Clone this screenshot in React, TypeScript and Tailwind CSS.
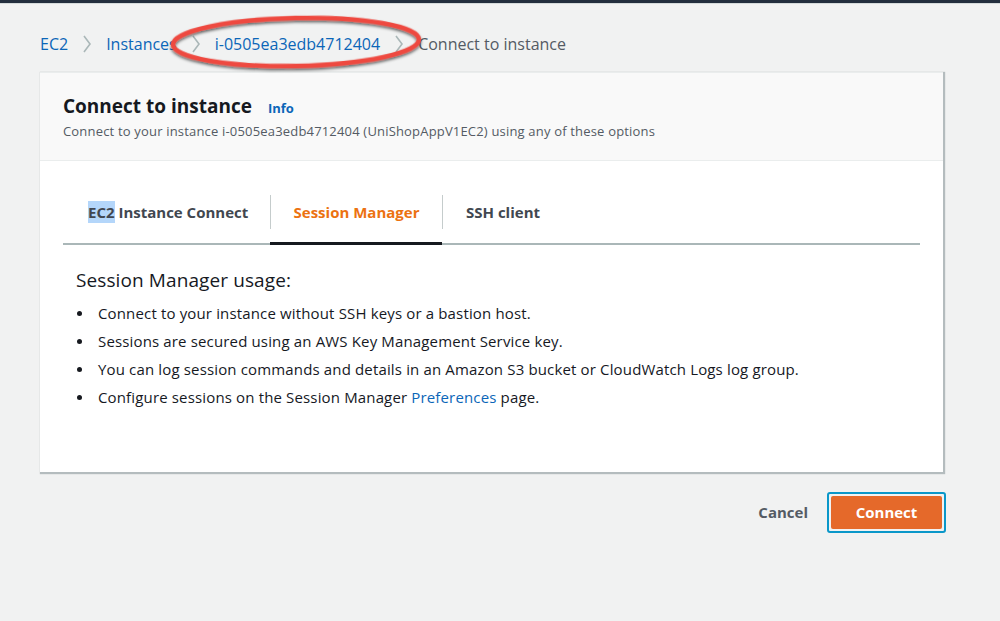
import React from "react";

const Chevron = () => (
  <svg width="10" height="20" viewBox="0 0 10 20" className="mx-[14px]">
    <path d="M2 2 L8 10 L2 18" fill="none" stroke="#aab7b8" strokeWidth="1.6" />
  </svg>
);

export default function App() {
  const font = { fontFamily: "'Open Sans', 'Noto Sans', sans-serif" };
  return (
    <div className="relative w-[1000px] h-[621px] bg-[#f1f2f2] overflow-hidden" style={font}>
      <div className="h-[3px] bg-[#232f3e]" />
      <div className="h-[1px] bg-[#d5dbdb]" />
      <nav className="flex items-center pl-[40px] pt-[27px] h-[52px] text-[16px] leading-[22px]">
        <span className="text-[#0b66b8]">EC2</span>
        <Chevron />
        <span className="text-[#0b66b8]">Instances</span>
        <Chevron />
        <span className="text-[#0b66b8]">i-0505ea3edb4712404</span>
        <Chevron />
        <span className="text-[#545b64]">Connect to instance</span>
      </nav>
      <div className="ml-[40px] mt-[16px] w-[903px] bg-white shadow-[1px_1px_1px_1px_rgba(0,28,36,0.25)] border-t border-[#eaeded]">
        <div className="bg-[#f9f9f9] border-b border-[#eaeded] px-[23px] pt-[19px] h-[88px]">
          <div className="flex items-baseline">
            <h1 className="text-[19px] font-bold text-[#16191f] leading-[28px]">Connect to instance</h1>
            <span className="ml-[16px] text-[13px] font-bold text-[#0b66b8]">Info</span>
          </div>
          <p className="text-[13px] text-[#545b64] leading-[20px] mt-[1px] tracking-[0.18px]">
            Connect to your instance i-0505ea3edb4712404 (UniShopAppV1EC2) using any of these options
          </p>
        </div>
        <div className="px-[23px] pt-[34px]">
          <div className="relative flex border-b-2 border-[#aab7b8] h-[50px] items-start">
            <div className="flex items-center h-[34px] w-[207px] pl-[25px] text-[15px] font-bold text-[#414750]">
              <span className="bg-[#b4d6fa]">EC2</span>&nbsp;Instance Connect
            </div>
            <div className="w-[1px] h-[34px] bg-[#c5cccc]" />
            <div className="relative w-[171px] h-[48px] flex items-start justify-center">
              <div className="h-[34px] flex items-center text-[15px] font-bold text-[#ec7211]">
                Session Manager
              </div>
              <div className="absolute -left-[1px] right-0 -bottom-[2px] h-[3px] bg-[#16191f]" />
            </div>
            <div className="w-[1px] h-[34px] bg-[#c5cccc]" />
            <div className="flex items-center h-[34px] pl-[23px] text-[15px] font-bold text-[#414750]">SSH client</div>
          </div>
        </div>
        <div className="px-[36px] pt-[21px] h-[227px] text-[#16191f]">
          <h2 className="text-[19px] leading-[28px] tracking-[0.1px]">Session Manager usage:</h2>
          <ul className="mt-[5px] text-[15px] leading-[28px] tracking-[0.15px]">
            {[
              <>Connect to your instance without SSH keys or a bastion host.</>,
              <>Sessions are secured using an AWS Key Management Service key.</>,
              <>You can log session commands and details in an Amazon S3 bucket or CloudWatch Logs log group.</>,
              <>Configure sessions on the Session Manager <span className="text-[#0b66b8]">Preferences</span> page.</>,
            ].map((t, i) => (
              <li key={i} className="flex items-center">
                <span className="w-[22px] pl-[1px] flex items-center">
                  <span className="block w-[5px] h-[5px] rounded-full bg-[#16191f]" />
                </span>
                <span>{t}</span>
              </li>
            ))}
          </ul>
        </div>
      </div>
      <div className="flex justify-end items-center w-[946px] mt-[20px] gap-[19px]">
        <span className="text-[15px] font-bold text-[#545b64]">Cancel</span>
        <div className="border-[2px] border-[#0a97c9] rounded-[3px] p-[2px]">
          <div className="w-[111px] h-[33px] bg-[#e5692a] rounded-[2px] flex items-center justify-center text-white text-[15px] font-bold">
            Connect
          </div>
        </div>
      </div>
      <svg className="absolute left-0 top-0" width="1000" height="100" viewBox="0 0 1000 100">
        <defs>
          <filter id="sh" x="-10%" y="-30%" width="120%" height="160%">
            <feDropShadow dx="0" dy="2" stdDeviation="1.5" floodColor="#000" floodOpacity="0.6" />
          </filter>
        </defs>
        <ellipse cx="296" cy="42" rx="123" ry="24" transform="rotate(-1.2 296 42)" fill="none" stroke="#ee4a40" strokeWidth="4.5" filter="url(#sh)" />
      </svg>
    </div>
  );
}
